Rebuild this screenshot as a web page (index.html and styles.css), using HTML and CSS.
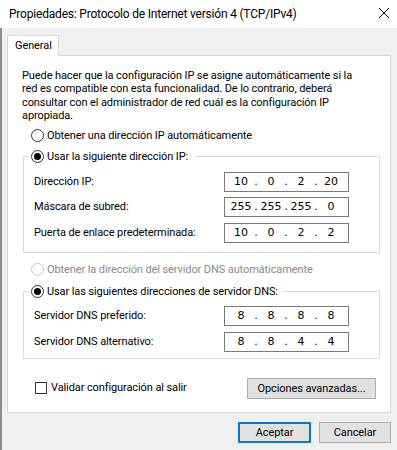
FILE: index.html
```html
<!DOCTYPE html>
<html lang="es">
<head>
  <meta charset="UTF-8">
  <meta name="viewport" content="width=device-width, initial-scale=1.0">
  <title>Propiedades: Protocolo de Internet versión 4 (TCP/IPv4)</title>
  <link rel="stylesheet" href="styles.css">
</head>
<body>

<div class="titlebar">
  <span class="title">Propiedades: Protocolo de Internet versión 4 (TCP/IPv4)</span>
  <svg class="close" width="12" height="12" viewBox="0 0 12 12">
    <path d="M1 1 L11 11 M11 1 L1 11" stroke="#000" stroke-width="1" fill="none"/>
  </svg>
</div>

<div class="window">
  <div class="tabs">
    <div class="tab">General</div>
  </div>

  <div class="panel">
    <p class="intro">Puede hacer que la configuración IP se asigne automáticamente si la<br>red es compatible con esta funcionalidad. De lo contrario, deberá<br>consultar con el administrador de red cuál es la configuración IP<br>apropiada.</p>

    <label class="radio radio-top"><span class="dot"></span>Obtener una dirección IP automáticamente</label>

    <fieldset class="group group-ip">
      <legend><label class="radio"><span class="dot checked"></span>Usar la siguiente dirección IP:</label></legend>
      <div class="rows">
        <div class="row">
          <span>Dirección IP:</span>
          <div class="ip"><span>10</span><i>.</i><span>0</span><i>.</i><span>2</span><i>.</i><span>20</span></div>
        </div>
        <div class="row">
          <span>Máscara de subred:</span>
          <div class="ip"><span>255</span><i>.</i><span>255</span><i>.</i><span>255</span><i>.</i><span>0</span></div>
        </div>
        <div class="row">
          <span>Puerta de enlace predeterminada:</span>
          <div class="ip"><span>10</span><i>.</i><span>0</span><i>.</i><span>2</span><i>.</i><span>2</span></div>
        </div>
      </div>
    </fieldset>

    <label class="radio radio-dns disabled"><span class="dot"></span>Obtener la dirección del servidor DNS automáticamente</label>

    <fieldset class="group group-dns">
      <legend><label class="radio"><span class="dot checked"></span>Usar las siguientes direcciones de servidor DNS:</label></legend>
      <div class="rows">
        <div class="row">
          <span>Servidor DNS preferido:</span>
          <div class="ip"><span>8</span><i>.</i><span>8</span><i>.</i><span>8</span><i>.</i><span>8</span></div>
        </div>
        <div class="row">
          <span>Servidor DNS alternativo:</span>
          <div class="ip"><span>8</span><i>.</i><span>8</span><i>.</i><span>4</span><i>.</i><span>4</span></div>
        </div>
      </div>
    </fieldset>

    <div class="bottom-row">
      <label class="check"><span class="box"></span>Validar configuración al salir</label>
      <button class="btn btn-advanced">Opciones avanzadas...</button>
    </div>
  </div>

  <div class="actions">
    <button class="btn btn-primary">Aceptar</button>
    <button class="btn">Cancelar</button>
  </div>
</div>

</body>
</html>
```

FILE: styles.css
```css
* {
  box-sizing: border-box;
}

body {
  margin: 0;
  width: 397px;
  height: 450px;
  overflow: hidden;
  background: #f0f0f0;
  font-family: "Segoe UI", Roboto, "Liberation Sans", sans-serif;
  font-size: 11px;
  letter-spacing: -0.1px;
  line-height: 16px;
  color: #000;
  display: flex;
  flex-direction: column;
}

/* title bar */
.titlebar {
  height: 28px;
  flex: none;
  background: #fff;
  display: flex;
  align-items: center;
  justify-content: space-between;
  padding: 0 7px 0 9px;
  white-space: nowrap;
  font-size: 12px;
  letter-spacing: -0.2px;
}

.close {
  display: block;
  margin-top: -2px;
}

/* window body */
.window {
  flex: 1;
  border-left: 2px solid #8c8c8c;
  padding: 7px 6px 0 5px;
}

.tabs {
  display: flex;
  position: relative;
  z-index: 1;
  margin-bottom: -1px;
}

.tab {
  width: 52px;
  height: 21px;
  padding: 2px 0 0 7px;
  background: #fff;
  border: 1px solid #d9d9d9;
  border-bottom: none;
}

.panel {
  background: #fff;
  border: 1px solid #d9d9d9;
  padding: 13px 10px 13px 14px;
}

.intro {
  margin: 0;
  line-height: 13.4px;
  white-space: nowrap;
}

/* radios */
.radio {
  display: flex;
  align-items: center;
  height: 16px;
  gap: 3px;
  white-space: nowrap;
}

.dot {
  width: 13px;
  height: 13px;
  border: 1px solid #333;
  border-radius: 50%;
  background: #fff;
  display: flex;
  align-items: center;
  justify-content: center;
  flex: none;
}

.dot.checked::after {
  content: "";
  width: 7px;
  height: 7px;
  border-radius: 50%;
  background: #000;
}

.radio-top {
  margin: 5px 0 0 9px;
}

.radio-dns {
  margin: 9px 0 0 9px;
}

.disabled {
  color: #8a8a8a;
}

.disabled .dot {
  border-color: #c6c6c6;
}

/* group boxes */
.group {
  margin: 5px 0 0 1px;
  border: 1px solid #dcdcdc;
  padding: 7px 30px 9px 10px;
}

.group legend {
  margin-left: -4px;
  padding: 0 6px 0 1px;
}

.group-dns {
  margin-top: 6px;
  padding-top: 6px;
  padding-bottom: 6px;
}

.rows {
  display: flex;
  flex-direction: column;
  gap: 5.5px;
}

.group-dns .rows {
  gap: 6px;
}

.row {
  display: flex;
  align-items: center;
  justify-content: space-between;
}

.ip {
  width: 125px;
  height: 20px;
  border: 1px solid #7a7a7a;
  display: flex;
  align-items: center;
  padding-left: 5px;
  font-family: "DejaVu Sans", sans-serif;
  font-size: 11px;
  letter-spacing: 0;
}

.ip span {
  width: 22px;
  text-align: center;
}

.ip i {
  font-style: normal;
  width: 8px;
  text-align: center;
}

/* bottom */
.bottom-row {
  margin-top: 19px;
  height: 21px;
  display: flex;
  align-items: center;
  justify-content: space-between;
  padding-right: 4px;
}

.check {
  display: flex;
  align-items: center;
  gap: 4px;
  margin-left: 13px;
}

.box {
  width: 12px;
  height: 12px;
  border: 1px solid #333;
  background: #fff;
}

.btn {
  font-family: inherit;
  font-size: 11px;
  letter-spacing: inherit;
  color: #000;
  height: 21px;
  background: #e1e1e1;
  border: 1px solid #adadad;
  padding: 0;
}

.btn-advanced {
  width: 129px;
}

.actions {
  margin-top: 9px;
  display: flex;
  justify-content: flex-end;
  gap: 8px;
}

.actions .btn {
  width: 72px;
}

.actions .btn-primary {
  width: 73px;
  border: 2px solid #0078d7;
}
```
